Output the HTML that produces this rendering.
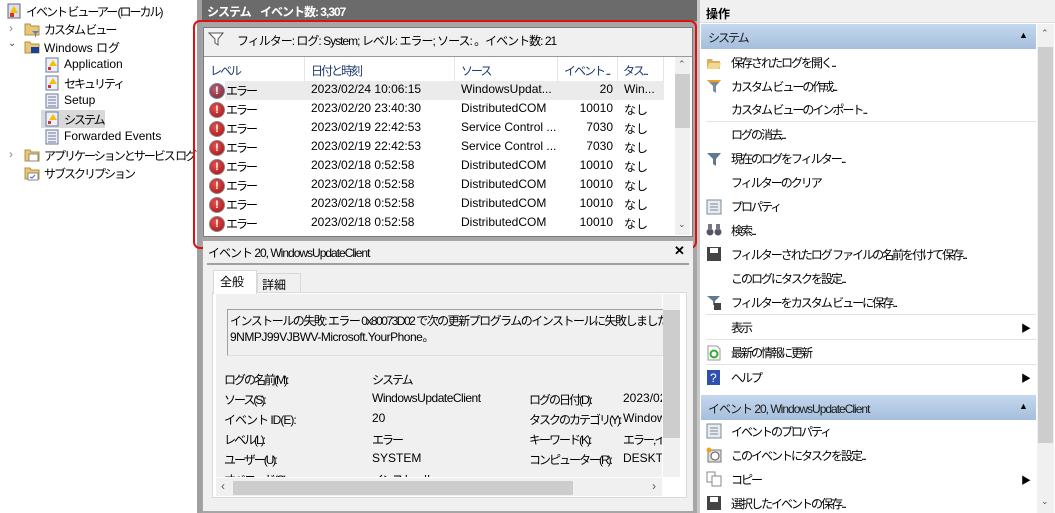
<!DOCTYPE html>
<html><head><meta charset="utf-8"><style>
*{margin:0;padding:0;box-sizing:border-box}
body{width:1055px;height:513px;overflow:hidden;background:#f0f0f0;font-family:"Liberation Sans","Noto Sans CJK JP",sans-serif;font-size:12px;color:#000;position:relative}
.a{position:absolute;white-space:nowrap}
.j{letter-spacing:-2px}
.m{letter-spacing:-1px}
.ic{position:absolute;width:16px;height:16px}
.err{position:absolute;width:16px;height:16px;border-radius:50%;background:radial-gradient(circle at 40% 35%,#e85050,#a01010);border:1px solid #888;color:#fff;font-weight:bold;font-size:11px;line-height:14px;text-align:center}
.item{position:absolute;left:731px;white-space:nowrap;letter-spacing:-2px}
.sep{position:absolute;left:706px;width:330px;height:1px;background:#e3e3e3}
</style></head><body>
<!-- left tree -->
<div class="a" style="left:0;top:0;width:197px;height:513px;background:#fff"></div>
<div class="a" style="left:197px;top:0;width:5px;height:513px;background:#a0a0a0"></div>
<svg class="ic" style="left:6px;top:3px" viewBox="0 0 16 16"><rect x="2" y="1" width="12" height="14" fill="#dde" stroke="#667"/><path d="M8 3L12 10H4Z" fill="#f2c200"/><rect x="4" y="10" width="4" height="4" fill="#c33"/></svg>
<div class="a j" style="left:26px;top:3px">イベント ビューアー (ローカル)</div>
<div class="a" style="left:9px;top:21px;color:#888">›</div>
<svg class="ic" style="left:24px;top:21px" viewBox="0 0 16 16"><path d="M1 3h5l1 2h8v9H1z" fill="#e8c878" stroke="#b09040"/><path d="M8 10h7l-3 3v3h-1v-3z" fill="#6080b0"/></svg>
<div class="a j" style="left:44px;top:21px">カスタム ビュー</div>
<div class="a" style="left:8px;top:38px;color:#444;font-size:10px">⌄</div>
<svg class="ic" style="left:24px;top:39px" viewBox="0 0 16 16"><path d="M1 3h5l1 2h8v9H1z" fill="#e8c878" stroke="#b09040"/><rect x="7" y="8" width="8" height="6" fill="#1840a0"/></svg>
<div class="a" style="left:44px;top:39px">Windows ログ</div>
<svg class="ic" style="left:44px;top:57px" viewBox="0 0 16 16"><rect x="2" y="1" width="12" height="14" fill="#eef" stroke="#6a7a90"/><path d="M9 3L13 9H5Z" fill="#f2c200"/><rect x="4" y="10" width="3" height="3" fill="#c33"/></svg>
<div class="a" style="left:64px;top:57px">Application</div>
<svg class="ic" style="left:44px;top:75px" viewBox="0 0 16 16"><rect x="2" y="1" width="12" height="14" fill="#eef" stroke="#6a7a90"/><path d="M9 3L13 9H5Z" fill="#f2c200"/><rect x="4" y="10" width="3" height="3" fill="#c33"/></svg>
<div class="a j" style="left:64px;top:75px">セキュリティ</div>
<svg class="ic" style="left:44px;top:93px" viewBox="0 0 16 16"><rect x="2" y="1" width="12" height="14" fill="#eef" stroke="#6a7a90"/><path d="M4 4h8M4 7h8M4 10h8M4 13h8" stroke="#6a7a90"/></svg>
<div class="a" style="left:64px;top:93px">Setup</div>
<div class="a" style="left:41px;top:110px;width:64px;height:18px;background:#d9d9d9"></div>
<svg class="ic" style="left:44px;top:111px" viewBox="0 0 16 16"><rect x="2" y="1" width="12" height="14" fill="#eef" stroke="#6a7a90"/><path d="M9 3L13 9H5Z" fill="#f2c200"/><rect x="4" y="10" width="3" height="3" fill="#c33"/></svg>
<div class="a j" style="left:64px;top:111px">システム</div>
<svg class="ic" style="left:44px;top:129px" viewBox="0 0 16 16"><rect x="2" y="1" width="12" height="14" fill="#eef" stroke="#6a7a90"/><path d="M4 4h8M4 7h8M4 10h8M4 13h8" stroke="#6a7a90"/></svg>
<div class="a" style="left:64px;top:129px">Forwarded Events</div>
<div class="a" style="left:9px;top:147px;color:#888">›</div>
<svg class="ic" style="left:24px;top:147px" viewBox="0 0 16 16"><path d="M1 3h5l1 2h8v9H1z" fill="#e8c878" stroke="#b09040"/><rect x="5" y="7" width="9" height="7" fill="#fff" stroke="#888"/></svg>
<div class="a j" style="left:44px;top:147px">アプリケーションとサービス ログ</div>
<svg class="ic" style="left:24px;top:165px" viewBox="0 0 16 16"><path d="M1 3h5l1 2h8v9H1z" fill="#e8c878" stroke="#b09040"/><rect x="4" y="8" width="10" height="7" fill="#fff" stroke="#888"/><path d="M6 12l2 1 3-3" stroke="#36c" fill="none"/></svg>
<div class="a j" style="left:44px;top:165px">サブスクリプション</div>

<!-- middle -->
<div class="a" style="left:202px;top:0;width:495px;height:21px;background:#6b6b6b"></div>
<div class="a" style="left:207px;top:3px;color:#fff;font-weight:bold;letter-spacing:-1px">システム&nbsp;&nbsp;&nbsp;&nbsp;イベント数: 3,307</div>
<div class="a" style="left:202px;top:21px;width:495px;height:492px;background:#a6a6a6"></div>
<div class="a" style="left:203px;top:27px;width:490px;height:210px;background:#f0f0f0;border:1px solid #7a7a7a"></div>
<svg class="a" style="left:208px;top:32px" width="16" height="14" viewBox="0 0 16 14"><path d="M1 1h14L10 7v6L7 11V7Z" fill="#fff" stroke="#555"/></svg>
<div class="a m" style="left:237px;top:32px">フィルター: ログ: System; レベル: エラー; ソース: 。イベント数: 21</div>
<div class="a" style="left:204px;top:56px;width:488px;height:180px;background:#fff;border-top:1px solid #999"></div>
<div class="a" style="left:204px;top:57px;width:470px;height:24px;background:#fff"></div>
<div class="a" style="left:304px;top:57px;width:1px;height:24px;background:#e5e5e5"></div>
<div class="a" style="left:454px;top:57px;width:1px;height:24px;background:#e5e5e5"></div>
<div class="a" style="left:557px;top:57px;width:1px;height:24px;background:#e5e5e5"></div>
<div class="a" style="left:617px;top:57px;width:1px;height:24px;background:#e5e5e5"></div>
<div class="a" style="left:663px;top:57px;width:1px;height:24px;background:#e5e5e5"></div>
<div class="a j" style="left:210px;top:62px;color:#1c3a6e">レベル</div>
<div class="a j" style="left:311px;top:62px;color:#1c3a6e">日付と時刻</div>
<div class="a j" style="left:461px;top:62px;color:#1c3a6e">ソース</div>
<div class="a j" style="left:564px;top:62px;color:#1c3a6e">イベント ...</div>
<div class="a j" style="left:623px;top:62px;color:#1c3a6e">タス...</div>
<div class="a" style="left:225px;top:81px;width:439px;height:19px;background:#ebebeb"></div>
<div class="a" style="left:675px;top:57px;width:15px;height:178px;background:#f0f0f0"></div>
<div class="a" style="left:675px;top:74px;width:15px;height:54px;background:#cdcdcd"></div>
<div class="a" style="left:678px;top:59px;font-size:9px;color:#555">⌃</div>
<div class="a" style="left:678px;top:219px;font-size:9px;color:#555">⌄</div>
<div id="rows"></div>

<!-- red box -->
<div class="a" style="left:193px;top:20px;width:504px;height:229px;border:2px solid #e01010;border-radius:7px"></div>

<!-- detail -->
<div class="a" style="left:203px;top:241px;width:490px;height:270px;background:#f0f0f0"></div>
<div class="a m" style="left:208px;top:244px;color:#000">イベント 20, WindowsUpdateClient</div>
<div class="a" style="left:674px;top:243px;font-weight:bold;font-size:13px">✕</div>
<div class="a" style="left:207px;top:263px;width:482px;height:2px;background:#a0a0a0"></div>
<div class="a" style="left:212px;top:292px;width:475px;height:206px;background:#fff;border:1px solid #d9d9d9"></div>
<div class="a" style="left:213px;top:270px;width:44px;height:24px;background:#fff;border:1px solid #d9d9d9;border-bottom:none"></div>
<div class="a" style="left:220px;top:273px">全般</div>
<div class="a" style="left:257px;top:273px;width:44px;height:20px;background:#f0f0f0;border:1px solid #d9d9d9"></div>
<div class="a" style="left:262px;top:276px">詳細</div>
<div class="a" style="left:216px;top:294px;width:446px;height:183px;background:#f0f0f0"></div>
<div class="a" style="left:227px;top:309px;width:436px;height:47px;background:#f0f0f0;border:1px solid #a0a0a0;border-right:none;border-bottom-color:#e0e0e0;overflow:hidden">
<div class="a" style="left:2px;top:2px;letter-spacing:-1.5px">インストールの失敗: エラー 0x80073D02 で次の更新プログラムのインストールに失敗しました:</div>
<div class="a" style="left:2px;top:18px;letter-spacing:-0.5px">9NMPJ99VJBWV-Microsoft.YourPhone。</div>
</div>
<div style="position:absolute;left:216px;top:294px;width:446px;height:183px;overflow:hidden">
<div class="a j" style="left:8px;top:77px">ログの名前(M):</div><div class="a j" style="left:156px;top:77px">システム</div>
<div class="a j" style="left:8px;top:97px">ソース(S):</div><div class="a" style="left:156px;top:97px;letter-spacing:-0.5px">WindowsUpdateClient</div>
<div class="a j" style="left:313px;top:97px">ログの日付(D):</div><div class="a" style="left:407px;top:97px">2023/02/24</div>
<div class="a m" style="left:8px;top:117px">イベント ID(E):</div><div class="a" style="left:156px;top:117px">20</div>
<div class="a j" style="left:313px;top:117px">タスクのカテゴリ(Y):</div><div class="a" style="left:407px;top:117px">Windows</div>
<div class="a j" style="left:8px;top:137px">レベル(L):</div><div class="a j" style="left:156px;top:137px">エラー</div>
<div class="a j" style="left:313px;top:137px">キーワード(K):</div><div class="a j" style="left:407px;top:137px">エラー,イ</div>
<div class="a j" style="left:8px;top:157px">ユーザー(U):</div><div class="a" style="left:156px;top:157px">SYSTEM</div>
<div class="a j" style="left:313px;top:157px">コンピューター(R):</div><div class="a" style="left:407px;top:157px">DESKTOP</div>
<div class="a j" style="left:8px;top:177px">オペコード(O):</div><div class="a j" style="left:156px;top:177px">インストール</div>
</div>
<div class="a" style="left:663px;top:294px;width:17px;height:183px;background:#f0f0f0"></div>
<div class="a" style="left:663px;top:310px;width:17px;height:128px;background:#cdcdcd"></div>
<div class="a" style="left:216px;top:478px;width:446px;height:18px;background:#f0f0f0"></div>
<div class="a" style="left:233px;top:481px;width:340px;height:14px;background:#cdcdcd"></div>
<div class="a" style="left:221px;top:479px;color:#555">‹</div>
<div class="a" style="left:652px;top:479px;color:#555">›</div>

<!-- right -->
<div class="a" style="left:697px;top:0;width:3px;height:513px;background:#c8c8c8"></div>
<div class="a" style="left:700px;top:0;width:355px;height:513px;background:#fff"></div>
<div class="a" style="left:700px;top:0;width:355px;height:23px;background:#f0f0f0;border-bottom:1px solid #ddd"></div>
<div class="a" style="left:706px;top:5px;font-weight:bold">操作</div>
<div class="a" style="left:1037px;top:24px;width:17px;height:489px;background:#f0f0f0"></div>
<div class="a" style="left:1038px;top:47px;width:15px;height:396px;background:#cdcdcd"></div>
<div class="a" style="left:1041px;top:28px;font-size:9px;color:#555">⌃</div>
<div class="a" style="left:1041px;top:496px;font-size:9px;color:#555">⌄</div>
<div class="a" style="left:701px;top:24px;width:335px;height:25px;background:linear-gradient(#c4d8ee,#a6bfdc)"></div>
<div class="a j" style="left:708px;top:29px;color:#1a1a1a">システム</div>
<div class="a" style="left:1019px;top:30px;font-size:9px">▲</div>
<div class="a" style="left:701px;top:395px;width:335px;height:25px;background:linear-gradient(#c4d8ee,#a6bfdc)"></div>
<div class="a m" style="left:708px;top:400px;color:#1a1a1a">イベント 20, WindowsUpdateClient</div>
<div class="a" style="left:1019px;top:401px;font-size:9px">▲</div>
<div class="sep" style="top:121px"></div>
<div class="sep" style="top:314px"></div>
<div class="sep" style="top:339px"></div>
<div class="sep" style="top:364px"></div>
<div class="item" style="top:54px">保存されたログを開く...</div>
<div class="item" style="top:78px">カスタム ビューの作成...</div>
<div class="item" style="top:101px">カスタム ビューのインポート...</div>
<div class="item" style="top:126px">ログの消去...</div>
<div class="item" style="top:150px">現在のログをフィルター...</div>
<div class="item" style="top:174px">フィルターのクリア</div>
<div class="item" style="top:198px">プロパティ</div>
<div class="item" style="top:222px">検索...</div>
<div class="item" style="top:246px">フィルターされたログ ファイルの名前を付けて保存...</div>
<div class="item" style="top:270px">このログにタスクを設定...</div>
<div class="item" style="top:294px">フィルターをカスタム ビューに保存...</div>
<div class="item" style="top:319px">表示</div>
<div class="item" style="top:344px">最新の情報に更新</div>
<div class="item" style="top:369px">ヘルプ</div>
<div class="item" style="top:423px">イベントのプロパティ</div>
<div class="item" style="top:447px">このイベントにタスクを設定...</div>
<div class="item" style="top:471px">コピー</div>
<div class="item" style="top:495px">選択したイベントの保存...</div>
<div class="a" style="left:1021px;top:320px;font-size:10px">▶</div>
<div class="a" style="left:1021px;top:370px;font-size:10px">▶</div>
<div class="a" style="left:1021px;top:472px;font-size:10px">▶</div>
<!-- right icons -->
<svg class="ic" style="left:706px;top:55px" viewBox="0 0 16 16"><path d="M1 4h5l1 2h7v8H1z" fill="#d8b060"/><path d="M3 8h12l-2 6H1z" fill="#f0d890"/></svg>
<svg class="ic" style="left:706px;top:78px" viewBox="0 0 16 16"><path d="M1 2h14L10 8v7L7 13V8Z" fill="#7a8aa0"/><path d="M1 2h14l-2 2H3z" fill="#f0a020"/></svg>
<svg class="ic" style="left:706px;top:151px" viewBox="0 0 16 16"><path d="M1 2h14L10 8v7L7 13V8Z" fill="#607890"/></svg>
<svg class="ic" style="left:706px;top:199px" viewBox="0 0 16 16"><rect x="1" y="1" width="14" height="14" fill="#e8ecf0" stroke="#7a8a9a"/><path d="M4 5h8M4 8h8M4 11h8" stroke="#7a8a9a"/></svg>
<svg class="ic" style="left:706px;top:222px" viewBox="0 0 16 16"><circle cx="4" cy="10" r="3.5" fill="#556"/><circle cx="12" cy="10" r="3.5" fill="#556"/><rect x="2" y="2" width="4" height="6" fill="#778"/><rect x="10" y="2" width="4" height="6" fill="#778"/></svg>
<svg class="ic" style="left:706px;top:246px" viewBox="0 0 16 16"><rect x="1" y="1" width="14" height="14" fill="#444"/><rect x="4" y="2" width="8" height="5" fill="#fff"/></svg>
<svg class="ic" style="left:706px;top:294px" viewBox="0 0 16 16"><path d="M1 2h13L9 7v4H7V7Z" fill="#607890"/><rect x="8" y="9" width="7" height="7" fill="#444"/></svg>
<svg class="ic" style="left:706px;top:345px" viewBox="0 0 16 16"><path d="M2 1h9l3 3v11H2z" fill="#fff" stroke="#999"/><circle cx="8" cy="9" r="3.5" fill="none" stroke="#3a3" stroke-width="2"/></svg>
<svg class="ic" style="left:706px;top:369px" viewBox="0 0 16 16"><rect x="1" y="1" width="13" height="15" fill="#3050b0"/><text x="4" y="13" font-size="12" fill="#fff" font-family="Liberation Sans">?</text></svg>
<svg class="ic" style="left:706px;top:423px" viewBox="0 0 16 16"><rect x="1" y="1" width="14" height="14" fill="#e8ecf0" stroke="#7a8a9a"/><path d="M4 5h8M4 8h8M4 11h8" stroke="#7a8a9a"/></svg>
<svg class="ic" style="left:706px;top:447px" viewBox="0 0 16 16"><rect x="2" y="3" width="13" height="12" fill="#ddd" stroke="#777"/><circle cx="9" cy="9" r="4" fill="#fff" stroke="#555"/><circle cx="3" cy="3" r="2.5" fill="#f0a020"/></svg>
<svg class="ic" style="left:706px;top:471px" viewBox="0 0 16 16"><rect x="1" y="1" width="8" height="10" fill="#fff" stroke="#888"/><rect x="6" y="5" width="9" height="10" fill="#fff" stroke="#888"/></svg>
<svg class="ic" style="left:706px;top:495px" viewBox="0 0 16 16"><rect x="1" y="1" width="14" height="14" fill="#444"/><rect x="4" y="2" width="8" height="5" fill="#fff"/></svg>
<script>
var d=[["2023/02/24 10:06:15","WindowsUpdat...","20","Win..."],["2023/02/20 23:40:30","DistributedCOM","10010","なし"],["2023/02/19 22:42:53","Service Control ...","7030","なし"],["2023/02/19 22:42:53","Service Control ...","7030","なし"],["2023/02/18 0:52:58","DistributedCOM","10010","なし"],["2023/02/18 0:52:58","DistributedCOM","10010","なし"],["2023/02/18 0:52:58","DistributedCOM","10010","なし"],["2023/02/18 0:52:58","DistributedCOM","10010","なし"]];
var h="";d.forEach(function(r,i){var y=82+i*19;
h+='<div class="err" style="left:209px;top:'+(y+1)+'px;'+(i==0?'background:radial-gradient(circle at 40% 35%,#c06070,#7a2030);border-color:#6a88b0':'')+'">!</div>';
h+='<div class="a j" style="left:226px;top:'+y+'px">エラー</div>';
h+='<div class="a" style="left:311px;top:'+y+'px">'+r[0]+'</div>';
h+='<div class="a" style="left:461px;top:'+y+'px">'+r[1]+'</div>';
h+='<div class="a" style="left:560px;width:53px;text-align:right;top:'+y+'px">'+r[2]+'</div>';
h+='<div class="a" style="left:624px;top:'+y+'px">'+r[3]+'</div>';});
document.getElementById("rows").innerHTML=h;
</script>
</body></html>
